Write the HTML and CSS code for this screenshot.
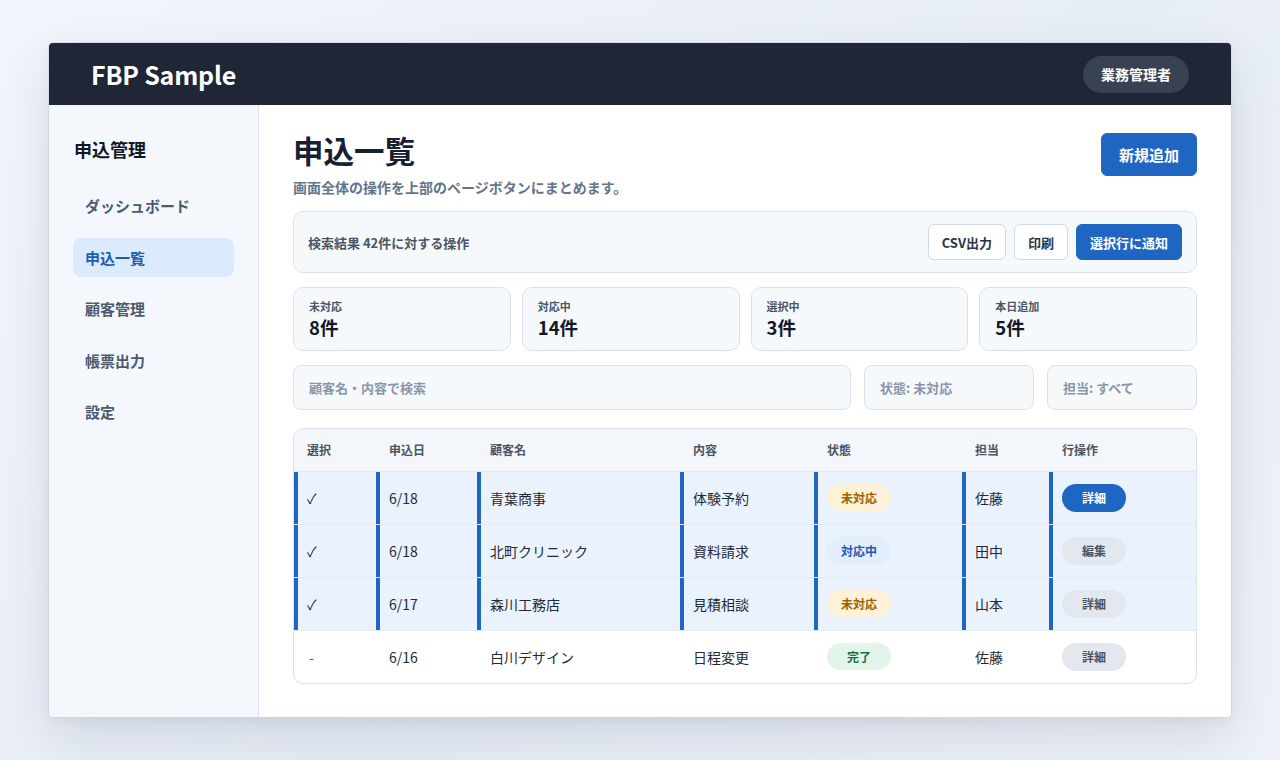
FILE: index.html
```html
<!DOCTYPE html>
<html lang="ja">
<head>
<meta charset="utf-8">
<title>FBP Sample - 申込一覧</title>
<link rel="stylesheet" href="styles.css">
</head>
<body>
<div class="app">
  <header class="topbar">
    <div class="brand">FBP Sample</div>
    <div class="role">業務管理者</div>
  </header>
  <div class="body">
    <aside class="sidebar">
      <div class="side-title">申込管理</div>
      <nav class="nav">
        <a class="nav-item">ダッシュボード</a>
        <a class="nav-item active">申込一覧</a>
        <a class="nav-item">顧客管理</a>
        <a class="nav-item">帳票出力</a>
        <a class="nav-item">設定</a>
      </nav>
    </aside>
    <main class="main">
      <div class="page-head">
        <div>
          <h1 class="page-title">申込一覧</h1>
          <p class="page-sub">画面全体の操作を上部のページボタンにまとめます。</p>
        </div>
        <button class="btn btn-primary btn-lg">新規追加</button>
      </div>

      <section class="toolbar">
        <span class="toolbar-label">検索結果 42件に対する操作</span>
        <div class="toolbar-actions">
          <button class="btn btn-outline">CSV出力</button>
          <button class="btn btn-outline">印刷</button>
          <button class="btn btn-primary">選択行に通知</button>
        </div>
      </section>

      <section class="stats">
        <div class="stat"><div class="stat-label">未対応</div><div class="stat-value">8件</div></div>
        <div class="stat"><div class="stat-label">対応中</div><div class="stat-value">14件</div></div>
        <div class="stat"><div class="stat-label">選択中</div><div class="stat-value">3件</div></div>
        <div class="stat"><div class="stat-label">本日追加</div><div class="stat-value">5件</div></div>
      </section>

      <section class="filters">
        <div class="field field-search">顧客名・内容で検索</div>
        <div class="field field-status">状態: 未対応</div>
        <div class="field field-owner">担当: すべて</div>
      </section>

      <div class="table-wrap">
        <table class="table">
          <colgroup>
            <col class="c-sel"><col class="c-date"><col class="c-name"><col class="c-body"><col class="c-state"><col class="c-owner"><col class="c-act">
          </colgroup>
          <thead>
            <tr><th>選択</th><th>申込日</th><th>顧客名</th><th>内容</th><th>状態</th><th>担当</th><th>行操作</th></tr>
          </thead>
          <tbody>
            <tr class="selected">
              <td>✓</td><td>6/18</td><td>青葉商事</td><td>体験予約</td>
              <td><span class="pill pill-todo">未対応</span></td><td>佐藤</td>
              <td><button class="row-btn row-btn-primary">詳細</button></td>
            </tr>
            <tr class="selected">
              <td>✓</td><td>6/18</td><td>北町クリニック</td><td>資料請求</td>
              <td><span class="pill pill-doing">対応中</span></td><td>田中</td>
              <td><button class="row-btn">編集</button></td>
            </tr>
            <tr class="selected">
              <td>✓</td><td>6/17</td><td>森川工務店</td><td>見積相談</td>
              <td><span class="pill pill-todo">未対応</span></td><td>山本</td>
              <td><button class="row-btn">詳細</button></td>
            </tr>
            <tr>
              <td class="muted">-</td><td>6/16</td><td>白川デザイン</td><td>日程変更</td>
              <td><span class="pill pill-done">完了</span></td><td>佐藤</td>
              <td><button class="row-btn">詳細</button></td>
            </tr>
          </tbody>
        </table>
      </div>
    </main>
  </div>
</div>
</body>
</html>
```
FILE: styles.css
```css
* { box-sizing: border-box; }

html, body { height: 100%; }

body {
  margin: 0;
  padding: 43px 49px;
  background: linear-gradient(135deg, #f1f5fb 0%, #e7edf5 55%, #eef2f8 100%);
  font-family: "Noto Sans CJK JP", "Noto Sans", sans-serif;
  color: #1f2937;
}

.app {
  height: 674px;
  display: flex;
  flex-direction: column;
  background: #ffffff;
  border-radius: 4px;
  overflow: hidden;
  box-shadow: 0 0 0 1px rgba(200, 212, 228, 0.6), 0 22px 50px rgba(30, 48, 80, 0.12), 0 4px 12px rgba(30, 48, 80, 0.05);
}

/* top bar */
.topbar {
  height: 62px;
  flex: none;
  background: #1f2737;
  display: flex;
  align-items: center;
  justify-content: space-between;
  padding: 0 42px 0 42px;
}

.brand {
  color: #ffffff;
  font-size: 25px;
  font-weight: 700;
  letter-spacing: -0.2px;
}

.role {
  height: 37px;
  padding: 0 18px;
  display: flex;
  align-items: center;
  border-radius: 19px;
  background: #394252;
  color: #ffffff;
  font-size: 14px;
  font-weight: 700;
}

.body {
  flex: 1;
  display: flex;
  min-height: 0;
}

/* sidebar */
.sidebar {
  width: 210px;
  flex: none;
  background: #f4f8fd;
  border-right: 1px solid #d9e2ee;
  padding: 32px 24px 0 24px;
}

.side-title {
  font-size: 18px;
  font-weight: 700;
  line-height: 24px;
  color: #111827;
  padding-left: 1px;
}

.nav {
  margin-top: 25px;
  display: flex;
  flex-direction: column;
  gap: 12.5px;
}

.nav-item {
  height: 39px;
  display: flex;
  align-items: center;
  padding: 0 12px;
  border-radius: 8px;
  font-size: 15px;
  font-weight: 700;
  color: #4b5a6e;
}

.nav-item.active {
  background: #dbeafc;
  color: #1d5cb4;
}

/* main */
.main {
  flex: 1;
  padding: 28px 34px 0 34px;
  display: flex;
  flex-direction: column;
}

.page-head {
  display: flex;
  justify-content: space-between;
  align-items: flex-start;
}

.page-title {
  margin: 0;
  font-size: 30.5px;
  line-height: 34px;
  font-weight: 700;
  color: #152033;
}

.page-sub {
  margin: 10px 0 0;
  font-size: 14px;
  line-height: 20px;
  font-weight: 700;
  color: #64748b;
}

.btn {
  font-family: inherit;
  font-weight: 700;
  border-radius: 6px;
  cursor: pointer;
  height: 36px;
  padding: 0 13px;
  font-size: 13px;
}

.btn-primary {
  background: #1f66c3;
  color: #ffffff;
  border: 1px solid #1f66c3;
}

.btn-outline {
  background: #ffffff;
  color: #2b3445;
  border: 1px solid #cfd9e5;
}

.btn-lg {
  height: 43px;
  padding: 0 17px;
  font-size: 15px;
}

/* bulk toolbar */
.toolbar {
  margin-top: 14px;
  height: 62px;
  display: flex;
  align-items: center;
  justify-content: space-between;
  padding: 0 14px 0 14px;
  background: #f6f9fc;
  border: 1px solid #d9e2ec;
  border-radius: 10px;
}

.toolbar-label {
  font-size: 13px;
  font-weight: 700;
  color: #4b5565;
}

.toolbar-actions {
  display: flex;
  gap: 8px;
}

/* stat cards */
.stats {
  margin-top: 14px;
  display: grid;
  grid-template-columns: repeat(4, 1fr);
  gap: 11px;
}

.stat {
  height: 64px;
  padding: 10px 15px 0;
  background: #f6f9fc;
  border: 1px solid #d9e2ec;
  border-radius: 10px;
}

.stat-label {
  font-size: 11px;
  line-height: 16px;
  font-weight: 700;
  color: #4b5565;
}

.stat-value {
  font-size: 18.5px;
  line-height: 26px;
  font-weight: 700;
  color: #111827;
}

/* filters */
.filters {
  margin-top: 14px;
  display: flex;
  gap: 13px;
}

.field {
  height: 45px;
  display: flex;
  align-items: center;
  padding: 0 15px;
  background: #f6f9fc;
  border: 1px solid #d9e2ec;
  border-radius: 8px;
  font-size: 13px;
  font-weight: 700;
  color: #8a96a8;
}

.field-search { flex: 1; }
.field-status { width: 170px; }
.field-owner { width: 150px; }

/* table */
.table-wrap {
  margin-top: 18px;
  border: 1px solid #d9e2ec;
  border-radius: 10px;
  overflow: hidden;
}

.table {
  width: 100%;
  border-collapse: collapse;
  table-layout: fixed;
}

.c-sel { width: 82px; }
.c-date { width: 101px; }
.c-name { width: 203px; }
.c-body { width: 134px; }
.c-state { width: 148px; }
.c-owner { width: 87px; }

.table th {
  height: 42px;
  text-align: left;
  padding: 0 0 0 13px;
  background: #f3f6fa;
  font-size: 12px;
  font-weight: 700;
  color: #4b5565;
  border-bottom: 1px solid #e1e8f0;
}

.table td {
  height: 53px;
  padding: 0 0 0 13px;
  font-size: 14px;
  color: #1f2937;
  border-top: 1px solid #e4ebf4;
}

.table tbody tr:first-child td { border-top: none; }

.table tr.selected td {
  background: #eaf2fe;
  box-shadow: inset 4px 0 0 #1f66c3;
}

.table td.muted { color: #4b5565; padding-left: 15px; }

.pill {
  display: inline-flex;
  align-items: center;
  justify-content: center;
  width: 64px;
  height: 27px;
  border-radius: 14px;
  font-size: 12px;
  font-weight: 700;
}

.pill-todo { background: #fdf1d8; color: #9a6306; }
.pill-doing { background: #e2edfd; color: #1d5cb4; }
.pill-done { background: #e3f5e9; color: #17733f; }

.row-btn {
  width: 64px;
  height: 28px;
  border: none;
  border-radius: 14px;
  font-family: inherit;
  font-size: 12px;
  font-weight: 700;
  background: #e3e8ef;
  color: #4b5565;
}

.row-btn-primary {
  background: #1f66c3;
  color: #ffffff;
}
```
